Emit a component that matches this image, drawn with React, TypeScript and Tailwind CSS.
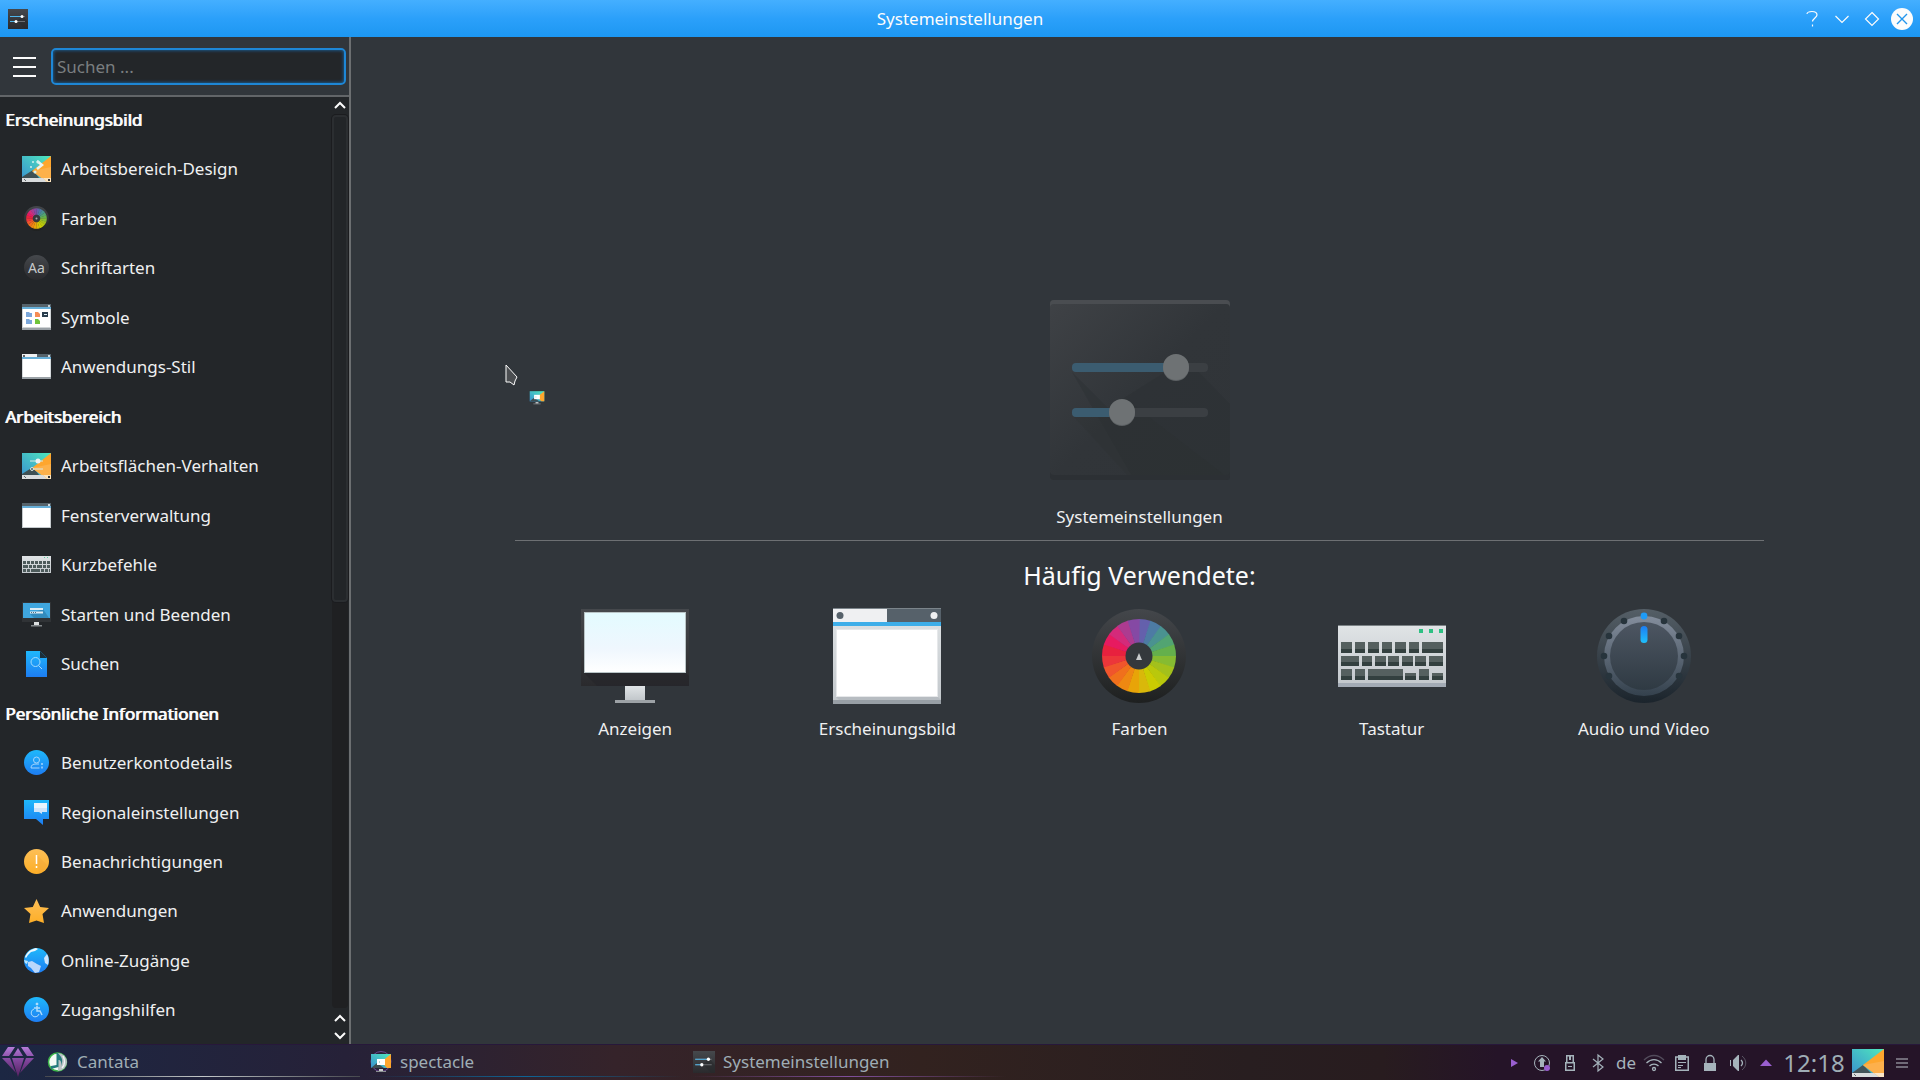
import React from 'react';

type IconProps = { className?: string };
type IconComponent = React.FC<IconProps>;

const WHEEL_COLORS = [
  '#6460ac', '#4d7ba4', '#4a9290', '#52a472', '#64b04c', '#86bb32', '#a3c01c', '#b9c80c',
  '#cbcc02', '#d9b80a', '#e8a408', '#ee8812', '#f0701c', '#f0552c', '#ec363a', '#e8213e',
  '#e71a60', '#d42a7a', '#ad3b90', '#8549a4',
];

const slicePath = (index: number, cx: number, cy: number, r: number) => {
  const step = (Math.PI * 2) / WHEEL_COLORS.length;
  const from = index * step;
  const to = from + step + 0.02;
  const point = (a: number) => `${cx + r * Math.sin(a)} ${cy - r * Math.cos(a)}`;
  return `M${cx} ${cy}L${point(from)}A${r} ${r} 0 0 1 ${point(to)}Z`;
};

const Gradients = () => (
  <svg className="absolute size-0" aria-hidden="true">
    <defs>
      <linearGradient id="blue" x1="0" y1="0" x2="0" y2="1">
        <stop offset="0" stopColor="#1fb8fb" />
        <stop offset="1" stopColor="#1d7df2" />
      </linearGradient>
      <linearGradient id="blueUp" x1="0" y1="1" x2="0" y2="0">
        <stop offset="0" stopColor="#1fc0fb" />
        <stop offset="1" stopColor="#1d7df2" />
      </linearGradient>
      <linearGradient id="orange" x1="0" y1="0" x2="0" y2="1">
        <stop offset="0" stopColor="#fdbf57" />
        <stop offset="1" stopColor="#fdae27" />
      </linearGradient>
      <linearGradient id="dark" x1="0" y1="0" x2="0" y2="1">
        <stop offset="0" stopColor="#45484c" />
        <stop offset="1" stopColor="#2a2a2d" />
      </linearGradient>
      <linearGradient id="disc" x1="0" y1="0" x2="0" y2="1">
        <stop offset="0" stopColor="#44474b" />
        <stop offset="1" stopColor="#1e2020" />
      </linearGradient>
      <linearGradient id="screen" x1="0" y1="0" x2="0" y2="1">
        <stop offset="0" stopColor="#e3fbff" />
        <stop offset="0.6" stopColor="#eff7fe" />
        <stop offset="1" stopColor="#ffffff" />
      </linearGradient>
      <linearGradient id="metal" x1="0" y1="0" x2="0" y2="1">
        <stop offset="0" stopColor="#e0e4e6" />
        <stop offset="1" stopColor="#c2c7cb" />
      </linearGradient>
      <linearGradient id="card" x1="0" y1="0" x2="1" y2="1">
        <stop offset="0" stopColor="#3f4246" />
        <stop offset="0.5" stopColor="#313539" />
        <stop offset="1" stopColor="#303438" />
      </linearGradient>
      <linearGradient id="dialOuter" x1="0" y1="0" x2="0" y2="1">
        <stop offset="0" stopColor="#555f67" />
        <stop offset="1" stopColor="#1b242c" />
      </linearGradient>
      <linearGradient id="dialRing" x1="0" y1="0" x2="0" y2="1">
        <stop offset="0" stopColor="#848e9d" />
        <stop offset="1" stopColor="#34414d" />
      </linearGradient>
      <linearGradient id="dialKnob" x1="0" y1="0" x2="0" y2="1">
        <stop offset="0" stopColor="#4d5662" />
        <stop offset="1" stopColor="#2f3a43" />
      </linearGradient>
      <linearGradient id="teal" x1="0" y1="1" x2="1" y2="0">
        <stop offset="0" stopColor="#3a8fd0" />
        <stop offset="1" stopColor="#4ee9bd" />
      </linearGradient>
      <linearGradient id="gem" x1="0" y1="0" x2="0" y2="1">
        <stop offset="0" stopColor="#b57bd8" />
        <stop offset="0.45" stopColor="#80459b" />
        <stop offset="1" stopColor="#53205f" />
      </linearGradient>
    </defs>
  </svg>
);

const Wallpaper: React.FC<{ children?: React.ReactNode; className?: string }> = ({ children, className }) => (
  <svg viewBox="0 0 30 30" className={className} aria-hidden="true">
    <rect y="2" width="29" height="26" fill="url(#teal)" />
    <path d="M0 23L11 16L17 24H0Z" fill="#3e5054" />
    <path d="M29 2V28H25L10 17Z" fill="#fea62e" />
    <path d="M10 17L29 13V28H25Z" fill="#fdb14a" />
    <path d="M0 24H21L25 28H0Z" fill="#d9dcdd" />
    <path d="M21 24H29V28H25Z" fill="#fbe3bd" />
    <path d="M2 25L4 27" stroke="#60676a" />
    {children}
  </svg>
);

const DesignIcon: IconComponent = ({ className }) => (
  <Wallpaper className={className}>
    <path d="M15 7L20 11L15 15" stroke="#e9f4f3" strokeWidth="2.500" fill="none" />
    <g fill="#d5f1ee">
      <circle cx="11" cy="8" r="1" />
      <circle cx="9" cy="13" r="1" />
      <circle cx="16" cy="8" r="1.500" />
      <circle cx="13" cy="18" r="1.500" />
    </g>
    <rect x="26" y="25" width="2" height="2" fill="#33373a" />
  </Wallpaper>
);

const BehaviourIcon: IconComponent = ({ className }) => (
  <Wallpaper className={className}>
    <path d="M8 10H21M10 18H21" stroke="#d9e9e7" strokeWidth="1" />
    <circle cx="16" cy="10" r="2.5" fill="#eef2f2" />
    <circle cx="10" cy="18" r="1.5" fill="#47575c" stroke="#d9e9e7" />
    <rect x="26" y="25" width="2" height="2" fill="#33373a" />
  </Wallpaper>
);

const ColorSmallIcon: IconComponent = ({ className }) => (
  <svg viewBox="0 0 30 30" className={className} aria-hidden="true">
    <circle cx="14.5" cy="14.5" r="12.5" fill="url(#disc)" />
    {WHEEL_COLORS.map((color, i) => (
      <path key={color} d={slicePath(i, 14.5, 14.5, 10.3)} fill={color} />
    ))}
    <circle cx="14.5" cy="14.5" r="3.7" fill="#35383c" />
    <circle cx="14.5" cy="14.5" r="1" fill="#a5a8aa" />
  </svg>
);

const FontsIcon: IconComponent = ({ className }) => (
  <svg viewBox="0 0 30 30" className={className} aria-hidden="true">
    <circle cx="14.5" cy="14.5" r="12.5" fill="url(#dark)" />
    <text x="14.5" y="20" textAnchor="middle" fontSize="14" fill="#c6c9ca" fontFamily="Noto Sans, sans-serif">
      Aa
    </text>
  </svg>
);

const SymbolsIcon: IconComponent = ({ className }) => (
  <svg viewBox="0 0 30 30" className={className} aria-hidden="true">
    <rect y="1" width="29" height="26" fill="#d0d4d6" />
    <rect y="1" width="29" height="4" fill="#56636b" />
    <rect y="4" width="29" height="2" fill="#67afd8" />
    <rect x="1" y="6" width="27" height="18" fill="#fff" />
    <rect y="25" width="29" height="2" fill="#9aa1a6" />
    <circle cx="27" cy="3" r="1" fill="#eee" />
    <path d="M4 9H7L8 10H10V14H4ZM4 16H7L8 17H10V21H4Z" fill="#7ba7da" />
    <path d="M13 9H16L18 11V14H13Z" fill="#f58d55" />
    <path d="M13 16H16L18 18V21H13Z" fill="#6fc43b" />
    <rect x="20" y="9" width="6" height="5" fill="#2b3e4d" />
    <path d="M22 11.5H25" stroke="#e6f4fb" />
  </svg>
);

const StyleIcon: IconComponent = ({ className }) => (
  <svg viewBox="0 0 30 30" className={className} aria-hidden="true">
    <rect y="2" width="29" height="25" fill="#d5d9db" />
    <rect y="2" width="15" height="4" fill="#eff0f1" />
    <rect x="15" y="2" width="14" height="4" fill="#56636b" />
    <rect y="5" width="29" height="2" fill="#67afd8" />
    <rect x="1" y="7" width="27" height="18" fill="#fff" />
    <rect y="25" width="29" height="2" fill="#9aa1a6" />
    <circle cx="2" cy="4" r="1" fill="#333" />
    <circle cx="27" cy="4" r="1" fill="#fff" />
  </svg>
);

const WindowIcon: IconComponent = ({ className }) => (
  <svg viewBox="0 0 30 30" className={className} aria-hidden="true">
    <rect y="2" width="29" height="25" fill="#c5cacd" />
    <rect y="2" width="29" height="4" fill="#56636b" />
    <rect y="5" width="29" height="2" fill="#67afd8" />
    <rect x="1" y="7" width="27" height="19" fill="#fff" />
    <circle cx="27" cy="4" r="1" fill="#fff" />
  </svg>
);

const ShortcutsIcon: IconComponent = ({ className }) => (
  <svg viewBox="0 0 30 30" className={className} aria-hidden="true">
    <rect y="6" width="29" height="17" fill="url(#metal)" />
    <path d="M22 7.5H28" stroke="#5cc79a" strokeDasharray="1 2" />
    <g fill="none" stroke="#4d5b5b" strokeWidth="3">
      <path d="M1 12.5H28" strokeDasharray="3 1" />
      <path d="M1 16.5H28" strokeDasharray="5 1 3 1 3 1" />
      <path d="M1 20.5H28" strokeDasharray="3 1 3 1 9 1" />
    </g>
  </svg>
);

const StartupIcon: IconComponent = ({ className }) => (
  <svg viewBox="0 0 30 30" className={className} aria-hidden="true">
    <rect y="2" width="29" height="20" fill="#303336" />
    <rect x="1" y="3" width="27" height="15" fill="#3fa6de" />
    <path d="M8 14L12 18H27L21 9Z" fill="#328bbd" />
    <path d="M8 9H21M8 12.5H21" stroke="#dcecf5" strokeWidth="2" />
    <path d="M9 12.5H14" stroke="#557181" strokeDasharray="1 1" />
    <rect x="12" y="22" width="5" height="3" fill="#dcdfe0" />
    <rect x="9" y="25" width="11" height="1.5" fill="#83888b" />
  </svg>
);

const SearchFileIcon: IconComponent = ({ className }) => (
  <svg viewBox="0 0 30 30" className={className} aria-hidden="true">
    <path d="M4 2H18L25 9V28H4Z" fill="url(#blue)" />
    <path d="M18 2L25 9H18Z" fill="#1c2f3a" />
    <circle cx="13.5" cy="13" r="4.5" fill="none" stroke="#a6ddfd" />
    <path d="M16.5 16.5L20 20" stroke="#a6ddfd" />
  </svg>
);

const UserIcon: IconComponent = ({ className }) => (
  <svg viewBox="0 0 30 30" className={className} aria-hidden="true">
    <circle cx="14.5" cy="14.5" r="12.5" fill="url(#blue)" />
    <g fill="none" stroke="#a4d5fc">
      <circle cx="14.5" cy="12" r="3" />
      <path d="M17.500 20H9C9 17 11 16 14 16H17" />
      <path d="M20 15V17M20 18.500V20.500" strokeWidth="1.500" />
    </g>
  </svg>
);

const RegionIcon: IconComponent = ({ className }) => (
  <svg viewBox="0 0 30 30" className={className} aria-hidden="true">
    <path d="M2 2H27V21H21V27L14 21H2Z" fill="url(#blue)" />
    <path d="M12 5H25V14H20V16L17 14H12Z" fill="#cfe4fa" />
    <path d="M12 5H25V10H12Z" fill="#e9f4fc" />
  </svg>
);

const NotifyIcon: IconComponent = ({ className }) => (
  <svg viewBox="0 0 30 30" className={className} aria-hidden="true">
    <circle cx="14.5" cy="14.5" r="12.5" fill="url(#orange)" />
    <path d="M15 8L25 18A12 12 0 0 1 17 26Z" fill="#f0a63a" opacity="0.4" />
    <path d="M14.500 8V17M14.500 19V21" stroke="#fff" strokeWidth="1.500" />
  </svg>
);

const StarIcon: IconComponent = ({ className }) => (
  <svg viewBox="0 0 30 30" className={className} aria-hidden="true">
    <path d="M14.500 3L18.200 11L27 12L20.500 18L22 27L14.500 24.500L7 27L8.500 18L2 12L10.800 11Z" fill="url(#orange)" />
  </svg>
);

const GlobeIcon: IconComponent = ({ className }) => (
  <svg viewBox="0 0 30 30" className={className} aria-hidden="true">
    <circle cx="14.5" cy="14.5" r="12.5" fill="url(#blue)" />
    <path d="M3 11C5 6 9 3 14 2L16 3L13 5L9 6L6 9L4 12Z" fill="#eef7fd" />
    <path d="M22 12L25 8C27 11 27 16 26 19L23 17Z" fill="#cfe4fb" />
    <path d="M6 16L10 15L15 18L19 20L17 26L13 27L9 22L6 20Z" fill="#b9d7fb" />
    <path d="M2 14L6 15L5 18L3 17Z" fill="#b9e4fc" />
  </svg>
);

const AccessIcon: IconComponent = ({ className }) => (
  <svg viewBox="0 0 30 30" className={className} aria-hidden="true">
    <circle cx="14.5" cy="14.5" r="12.500" fill="url(#blue)" />
    <g fill="none" stroke="#b0dcfc">
      <circle cx="15" cy="9" r="1" fill="#e0f2fe" />
      <path d="M12 13H18M15 11V16H18L20 20" strokeWidth="1.500" />
      <path d="M12 14A4 4 0 1 0 17 19" />
    </g>
  </svg>
);

const SettingsIcon: IconComponent = ({ className }) => (
  <svg viewBox="0 0 20 20" className={className} aria-hidden="true">
    <rect width="20" height="20" fill="url(#dark)" />
    <path d="M9 12L17 20H20V13L15 7Z" fill="#25272a" opacity="0.5" />
    <path d="M2 7.500H17M2 12.500H17" stroke="#6b6e72" />
    <path d="M2 7.500H13M2 12.500H8" stroke="#4fb5ea" />
    <circle cx="14" cy="7.500" r="1.500" fill="#fff" />
    <circle cx="8" cy="12.500" r="1.500" fill="#fff" />
  </svg>
);

const HeroIcon: IconComponent = ({ className }) => (
  <svg viewBox="0 0 180 180" className={className} aria-hidden="true">
    <rect width="180" height="180" rx="4" fill="url(#card)" />
    <path d="M22 72L58 108L136 59L180 104V180H84Z" fill="#2b2f33" opacity="0.4" />
    <path d="M24 117L78 176H176L81 103Z" fill="#2a2e31" opacity="0.25" />
    <path d="M0 8V4A4 4 0 0 1 4 0H176A4 4 0 0 1 180 4V8A4 4 0 0 0 176 4H4A4 4 0 0 0 0 8Z" fill="#4a4d51" />
    <path d="M0 172V176A4 4 0 0 0 4 180H176A4 4 0 0 0 180 176V172A4 4 0 0 1 176 175H4A4 4 0 0 1 0 172Z" fill="#2c3034" />
    <rect x="22" y="63" width="136" height="9" rx="4" fill="#3b3f43" />
    <rect x="22" y="63" width="104" height="9" rx="4" fill="#3b5c70" />
    <rect x="22" y="108" width="136" height="9" rx="4" fill="#3b3f43" />
    <rect x="22" y="108" width="50" height="9" rx="4" fill="#3b5c70" />
    <circle cx="126" cy="68" r="13" fill="#5d6164" />
    <circle cx="126" cy="67" r="13" fill="#6e7274" />
    <circle cx="72" cy="113" r="13" fill="#5d6164" />
    <circle cx="72" cy="112" r="13" fill="#6e7274" />
  </svg>
);

const DisplayIcon: IconComponent = ({ className }) => (
  <svg viewBox="0 0 108 96" className={className} aria-hidden="true">
    <rect y="1" width="108" height="77" fill="url(#dark)" />
    <path d="M3 65L16 78H108V68L105 65Z" fill="#252529" opacity="0.6" />
    <rect x="3" y="4" width="102" height="61" fill="#b9c4c6" />
    <rect x="4" y="5" width="100" height="59" fill="url(#screen)" />
    <rect x="44" y="78" width="20" height="14" fill="url(#metal)" />
    <rect x="34" y="92" width="40" height="3" fill="#9da2a6" />
  </svg>
);

const AppearanceIcon: IconComponent = ({ className }) => (
  <svg viewBox="0 0 108 96" className={className} aria-hidden="true">
    <rect width="108" height="96" fill="url(#metal)" />
    <rect width="54" height="14" fill="#eff0f2" />
    <rect x="54" width="54" height="14" fill="#56616a" />
    <rect width="108" height="1" fill="#7b848a" />
    <rect y="14" width="108" height="4" fill="#3daee9" />
    <path d="M3 89L10 96H108V92L105 89Z" fill="#aab0b5" opacity="0.5" />
    <rect x="3" y="21" width="102" height="68" fill="#e6e8ea" />
    <rect x="4" y="22" width="100" height="66" fill="#fff" />
    <rect y="92" width="108" height="4" fill="#989fa5" />
    <circle cx="7" cy="7.500" r="3.500" fill="#56616a" />
    <circle cx="101" cy="7.500" r="3.500" fill="#eff0f2" />
  </svg>
);

const ColorsIcon: IconComponent = ({ className }) => (
  <svg viewBox="0 0 108 96" className={className} aria-hidden="true">
    <circle cx="54" cy="48" r="47" fill="url(#disc)" />
    {WHEEL_COLORS.map((color, i) => (
      <path key={color} d={slicePath(i, 54, 48, 37)} fill={color} />
    ))}
    <circle cx="54" cy="48" r="13.5" fill="#34383c" />
    <path d="M54 45L57 52H51Z" fill="#c8cbcc" />
  </svg>
);

// x, y, width, height
const KEYS = [
  [3, 34, 11, 11], [17, 34, 10, 11], [30, 34, 11, 11], [44, 34, 10, 11], [57, 34, 11, 11], [71, 34, 10, 11], [84, 34, 21, 11],
  [3, 48, 18, 10], [24, 48, 10, 10], [37, 48, 11, 10], [50, 48, 11, 10], [64, 48, 11, 10], [77, 48, 11, 10], [91, 48, 14, 10],
  [3, 61, 11, 11], [17, 61, 10, 11], [30, 61, 35, 11], [67, 65, 11, 7], [81, 61, 10, 11], [94, 65, 11, 7],
];

const KeyboardIcon: IconComponent = ({ className }) => (
  <svg viewBox="0 0 108 96" className={className} aria-hidden="true">
    <rect y="17" width="108" height="62" fill="url(#metal)" />
    <rect y="17" width="108" height="1" fill="#7b8285" />
    <rect y="75" width="108" height="4" fill="#a3abb5" />
    <path d="M81 21H85V25H81ZM91 21H95V25H91ZM101 21H105V25H101Z" fill="#2ec183" />
    {KEYS.map(([x, y, w, h]) => (
      <g key={`${x}-${y}`}>
        <rect x={x} y={y} width={w} height={h} fill="#55605f" />
        <rect x={x} y={y + h - 4} width={w} height="4" fill="#33403f" />
      </g>
    ))}
  </svg>
);

const DIAL_DOTS = [[-20, -35], [20, -35], [-35, -20], [35, -20], [-40, 0], [40, 0], [-35, 20], [35, 20]];

const AudioIcon: IconComponent = ({ className }) => (
  <svg viewBox="0 0 108 96" className={className} aria-hidden="true">
    <circle cx="54" cy="48" r="47" fill="url(#dialOuter)" />
    <circle cx="54" cy="48" r="40" fill="url(#dialRing)" />
    <circle cx="54" cy="48" r="34" fill="url(#dialKnob)" />
    {DIAL_DOTS.map(([x, y]) => (
      <circle key={`${x}${y}`} cx={54 + x} cy={48 + y} r="3.300" fill="#27343c" />
    ))}
    <circle cx="54" cy="8" r="3.400" fill="#1e9bf7" />
    <rect x="50.500" y="18" width="7" height="17" rx="3.500" fill="url(#blueUp)" />
  </svg>
);

const SpectacleIcon: IconComponent = ({ className }) => (
  <svg viewBox="0 0 22 22" className={className} aria-hidden="true">
    <rect y="2" width="22" height="16" fill="#30363a" />
    <rect x="1" y="3" width="20" height="14" fill="url(#teal)" />
    <path d="M21 3V17H17L11 11Z" fill="#fea62e" />
    <path d="M1 17L7 12L14 17Z" fill="#3e4c50" />
    <path d="M7 8H15V14H7Z" fill="#fff" />
    <path d="M9 10H10V12H9Z" fill="#b8d6cf" />
    <rect x="9" y="18" width="4" height="2" fill="#c9cccd" />
    <rect x="6" y="20" width="10" height="1" fill="#8b9093" />
  </svg>
);

// Task entry version, ringed while the program starts
const SpectacleTaskIcon: IconComponent = ({ className }) => (
  <svg viewBox="0 0 22 22" className={className} aria-hidden="true">
    <circle cx="11" cy="10.500" r="10" fill="none" stroke="#6d4a94" />
    <rect x="1" y="3" width="20" height="14" fill="url(#teal)" />
    <path d="M21 3V17H17L11 11Z" fill="#fea62e" />
    <path d="M1 17L7 12L14 17Z" fill="#3e4c50" />
    <path d="M7 8H15V14H7Z" fill="#fff" />
    <path d="M9 10H10V12H9Z" fill="#b8d6cf" />
    <rect x="9" y="18" width="4" height="2" fill="#c9cccd" />
    <rect x="6" y="20" width="10" height="1" fill="#8b9093" />
  </svg>
);

const CantataIcon: IconComponent = ({ className }) => (
  <svg viewBox="0 0 22 22" className={className} aria-hidden="true">
    <circle cx="10.500" cy="11" r="9" fill="#f4faf5" stroke="#3cb549" strokeWidth="1.500" />
    <path d="M11 2A9 9 0 0 1 11 20Z" fill="#b9c2c4" />
    <path d="M9.500 2H11C14 6 17 8 14 15C15 10 13 9 11.500 9V16L4 18L4 15L9.500 14Z" fill="#257b7d" />
    <path d="M16 5C18 9 18 14 15 17" stroke="#f1f5f5" strokeWidth="1.500" fill="none" />
  </svg>
);

type Entry = { label: string; icon: IconComponent };

const SECTIONS: { title: string; items: Entry[] }[] = [
  {
    title: 'Erscheinungsbild',
    items: [
      { label: 'Arbeitsbereich-Design', icon: DesignIcon },
      { label: 'Farben', icon: ColorSmallIcon },
      { label: 'Schriftarten', icon: FontsIcon },
      { label: 'Symbole', icon: SymbolsIcon },
      { label: 'Anwendungs-Stil', icon: StyleIcon },
    ],
  },
  {
    title: 'Arbeitsbereich',
    items: [
      { label: 'Arbeitsflächen-Verhalten', icon: BehaviourIcon },
      { label: 'Fensterverwaltung', icon: WindowIcon },
      { label: 'Kurzbefehle', icon: ShortcutsIcon },
      { label: 'Starten und Beenden', icon: StartupIcon },
      { label: 'Suchen', icon: SearchFileIcon },
    ],
  },
  {
    title: 'Persönliche Informationen',
    items: [
      { label: 'Benutzerkontodetails', icon: UserIcon },
      { label: 'Regionaleinstellungen', icon: RegionIcon },
      { label: 'Benachrichtigungen', icon: NotifyIcon },
      { label: 'Anwendungen', icon: StarIcon },
      { label: 'Online-Zugänge', icon: GlobeIcon },
      { label: 'Zugangshilfen', icon: AccessIcon },
    ],
  },
];

const FREQUENT: Entry[] = [
  { label: 'Anzeigen', icon: DisplayIcon },
  { label: 'Erscheinungsbild', icon: AppearanceIcon },
  { label: 'Farben', icon: ColorsIcon },
  { label: 'Tastatur', icon: KeyboardIcon },
  { label: 'Audio und Video', icon: AudioIcon },
];

const TitleBar = () => (
  <header className="grid h-[37px] shrink-0 grid-cols-[1fr_auto_1fr] items-center bg-linear-to-b from-[#44afff] via-[#2ba0fa] to-[#1c97f2] text-[#fcfcfc]">
    <SettingsIcon className="ml-2 size-5" />
    <h1>Systemeinstellungen</h1>
    <div className="flex justify-end pr-[3px]">
      <button aria-label="Hilfe" className="grid size-[30px] place-items-center">
        <svg viewBox="0 0 22 22" className="size-[22px]" fill="none" stroke="currentColor">
          <path d="M6 6C6 4.500 8 3.500 11 3.500S16 4.500 16 7S11.500 10.500 11.500 13.500" strokeWidth="1.200" />
          <path d="M11.500 16.500V18.500" strokeWidth="1.200" />
        </svg>
      </button>
      <button aria-label="Minimieren" className="grid size-[30px] place-items-center">
        <svg viewBox="0 0 22 22" className="size-[22px]" fill="none" stroke="currentColor" strokeWidth="1.200">
          <path d="M4.500 8L11 14.500L17.500 8" />
        </svg>
      </button>
      <button aria-label="Wiederherstellen" className="grid size-[30px] place-items-center">
        <svg viewBox="0 0 22 22" className="size-[22px]" fill="none" stroke="currentColor" strokeWidth="1.200">
          <path d="M11 4.500L17.500 11L11 17.500L4.500 11Z" />
        </svg>
      </button>
      <button aria-label="Schließen" className="grid size-[30px] place-items-center">
        <svg viewBox="0 0 22 22" className="size-[22px]">
          <circle cx="11" cy="11" r="11" fill="#fcfcfc" />
          <path d="M6 6L16 16M16 6L6 16" stroke="#2196ee" strokeWidth="1.400" />
        </svg>
      </button>
    </div>
  </header>
);

const Chevron: React.FC<{ down?: boolean }> = ({ down }) => (
  <svg viewBox="0 0 12 8" className="h-2 w-3" fill="none" stroke="#fcfcfc" strokeWidth="2" aria-hidden="true">
    <path d={down ? 'M1 1L6 6L11 1' : 'M1 7L6 2L11 7'} />
  </svg>
);

const Scrollbar = () => (
  <div className="flex w-[17px] shrink-0 flex-col pr-px">
    <button aria-label="Nach oben" className="grid h-4 shrink-0 place-items-center">
      <Chevron />
    </button>
    <div className="mt-0.5 min-h-0 flex-1 rounded-sm bg-[#1f2022]">
      <div className="h-6/11 rounded border-2 border-[#2b2e31] bg-[#222528] shadow-[0_0_0_1px_#1b1c1f]" />
    </div>
    <button aria-label="Seite nach oben" className="grid h-5 shrink-0 place-items-center">
      <Chevron />
    </button>
    <button aria-label="Nach unten" className="grid h-4 shrink-0 place-items-center">
      <Chevron down />
    </button>
  </div>
);

const Sidebar = () => (
  <aside className="flex w-[351px] shrink-0 flex-col border-r-2 border-[#6c6f71] bg-[#232629]">
    <div className="flex h-[60px] shrink-0 items-center gap-[15px] border-b-2 border-[#626568] bg-[#31363b] pt-px pr-[3px] pl-[13px]">
      <button aria-label="Menü" className="flex w-[23px] flex-col gap-[7px]">
        <span className="h-0.5 bg-[#fcfcfc]" />
        <span className="h-0.5 bg-[#fcfcfc]" />
        <span className="h-0.5 bg-[#fcfcfc]" />
      </button>
      <input
        type="text"
        aria-label="Suchen"
        placeholder="Suchen ..."
        className="h-[37px] min-w-0 flex-1 rounded-[5px] border-2 border-[#1e87d6] bg-[#232629] px-1 shadow-[inset_0_0_3px_1px_#1d5480] outline-none placeholder:text-[#7a7e80]"
      />
    </div>
    <div className="flex min-h-0 flex-1">
      <nav className="-mt-0.5 flex min-w-0 flex-1 flex-col overflow-hidden">
        {SECTIONS.map((section) => (
          <section key={section.title} className="grid h-[297px] shrink-0 auto-rows-fr last:h-[346px]">
            <h2 className="flex items-center pl-[5px] text-[#fcfcfc] [text-shadow:1px_0_0_currentColor]">
              {section.title}
            </h2>
            <ul className="contents">
              {section.items.map(({ label, icon: Icon }) => (
                <li key={label} className="flex">
                  <button className="flex w-full items-center gap-[9px] pl-[22px] text-left">
                    <Icon className="size-[30px] shrink-0" />
                    {label}
                  </button>
                </li>
              ))}
            </ul>
          </section>
        ))}
      </nav>
      <Scrollbar />
    </div>
  </aside>
);

const Overview = () => (
  <main className="flex min-w-0 flex-1 flex-col items-center justify-center pb-10 pl-2">
    <HeroIcon className="size-[180px]" />
    <p className="mt-[25px]">Systemeinstellungen</p>
    <hr className="mt-[11px] w-4/5 border-[#6d7073]" />
    <h2 className="mt-[18px] text-[25px] leading-8 text-[#fcfcfc]">Häufig Verwendete:</h2>
    <div className="mt-[17px] grid w-4/5 grid-cols-5 gap-3">
      {FREQUENT.map(({ label, icon: Icon }) => (
        <button key={label} className="flex flex-col items-center gap-[13px]">
          <Icon className="h-24 w-[108px]" />
          {label}
        </button>
      ))}
    </div>
  </main>
);

const TASKS = [
  { label: 'Cantata', icon: CantataIcon, line: 'from-[#47494f] via-[#c3c8c9] to-[#47494f]' },
  { label: 'spectacle', icon: SpectacleTaskIcon, line: 'from-transparent via-[#0e6496] to-transparent' },
  { label: 'Systemeinstellungen', icon: SettingsIcon, line: 'from-transparent via-[#80509c] to-transparent' },
];

const TRAY: { label: string; content: React.ReactNode }[] = [
  { label: 'Wiedergabe', content: <path d="M8 7L15 11L8 15Z" fill="#9a5fd0" /> },
  {
    label: 'Aktualisierungen',
    content: (
      <>
        <circle cx="11" cy="11" r="7.500" fill="none" stroke="currentColor" />
        <path d="M11 5L15 9.500H13V15H9V9.500H7Z" fill="currentColor" />
        <circle cx="16" cy="16" r="3" fill="#9a5fd0" />
      </>
    ),
  },
  {
    label: 'Geräte',
    content: (
      <path
        d="M7 3H15V10H16V19H6V10H7ZM8.500 4.500V10H13.500V4.500H12V8H10V4.500ZM7.500 11.500V17.500H14.500V11.500ZM9 14H13V15H9Z"
        fill="currentColor"
        fillRule="evenodd"
      />
    ),
  },
  {
    label: 'Bluetooth',
    content: <path d="M6 7L16 15L11 19V3L16 7L6 15" fill="none" stroke="currentColor" strokeWidth="1.200" />,
  },
  { label: 'Tastaturbelegung', content: null },
  {
    label: 'Netzwerk',
    content: (
      <g fill="none" stroke="currentColor" strokeWidth="1.300">
        <path d="M1 8C7 2 15 2 21 8" opacity="0.35" />
        <path d="M3.500 11C8 6.500 14 6.500 18.500 11" />
        <path d="M6.500 14C9 11.500 13 11.500 15.500 14" />
        <circle cx="11" cy="17" r="1.500" />
      </g>
    ),
  },
  {
    label: 'Zwischenablage',
    content: (
      <g fill="none" stroke="currentColor">
        <path d="M4.750 5H17.250V18.250H4.750Z" strokeWidth="1.500" />
        <path d="M7 3H15V8H7Z" fill="currentColor" stroke="none" />
        <path d="M7 10.500H15M7 13.500H12M7 15.500H10" />
      </g>
    ),
  },
  {
    label: 'Sperre',
    content: (
      <>
        <rect x="5" y="11" width="12" height="8" fill="currentColor" />
        <path d="M7 11V7.500A4 4 0 0 1 15 7.500V11" fill="none" stroke="currentColor" strokeWidth="1.300" />
      </>
    ),
  },
  {
    label: 'Lautstärke',
    content: (
      <g fill="none" stroke="currentColor">
        <path d="M3 8H4V14H3ZM6 8L11 3H12V19H11L6 14Z" fill="currentColor" stroke="none" />
        <path d="M14 8C16 10 16 12 14 14" strokeWidth="1.300" />
        <path d="M15 4C20 8 20 14 15 18" opacity="0.4" />
      </g>
    ),
  },
  { label: 'Weitere', content: <path d="M5 14L11 7.500L17 14Z" fill="#9a5fd0" /> },
];

const Taskbar = () => (
  <footer className="flex h-9 shrink-0 border-t border-[#27183a] bg-[linear-gradient(to_right,#1c2743,#262138_18%,#35232a_32%,#32221f_48%,#281e20_65%,#281c1f_72%,#251428_78%)] text-[#9fadb5]">
    <button aria-label="Anwendungsmenü" className="w-9 shrink-0">
      <svg viewBox="0 0 36 34" className="h-[34px] w-9" fill="url(#gem)">
        <path d="M8 1H15L9 10H2ZM18 2L23 10H13ZM21 1H28L34 10H27ZM2 12H10L16 27ZM12 12H24L18 31ZM26 12H34L20 27Z" />
      </svg>
    </button>
    <div className="flex min-w-0 flex-1 gap-2 pl-[9px]">
      {TASKS.map(({ label, icon: Icon, line }) => (
        <button key={label} className="flex w-[315px] min-w-0 flex-col">
          <span className="flex min-h-0 flex-1 items-center gap-2 pt-[3px] pl-0.5">
            <Icon className="size-[22px]" />
            {label}
          </span>
          <span className={`mb-[3px] h-px w-full bg-linear-to-r ${line}`} />
        </button>
      ))}
    </div>
    <div className="flex items-center pr-1">
      {TRAY.map(({ label, content }) => (
        <button key={label} aria-label={label} className="grid w-7 place-items-center text-[#a5b3bb]">
          {content ? (
            <svg viewBox="0 0 22 22" className="size-[22px]">
              {content}
            </svg>
          ) : (
            'de'
          )}
        </button>
      ))}
      <time className="w-[68px] text-center text-2xl">12:18</time>
      <button aria-label="Arbeitsfläche anzeigen" className="ml-1">
        <svg viewBox="0 0 32 28" className="h-7 w-8">
          <rect width="32" height="28" fill="url(#teal)" />
          <path d="M0 24L11 16L19 24Z" fill="#435459" />
          <path d="M32 0V28H27L11 16Z" fill="#fea62e" />
          <path d="M11 16L32 12V28H27Z" fill="#fdb04c" />
          <path d="M0 24H22L27 28H0Z" fill="#d9dcdd" />
          <path d="M22 24H32V28H27Z" fill="#fbe6c8" />
          <path d="M2 25L4 27" stroke="#60676a" />
        </svg>
      </button>
      <button aria-label="Leiste einrichten" className="ml-1 grid w-7 place-items-center">
        <svg viewBox="0 0 12 10" className="h-2.5 w-3">
          <path d="M0 1H12M0 5H12M0 9H12" stroke="#706a78" strokeWidth="2" />
        </svg>
      </button>
    </div>
  </footer>
);

// Pointer with the bouncing launch icon next to it
const Pointer = () => (
  <div className="pointer-events-none absolute top-[364px] left-[505px]">
    <svg viewBox="0 0 14 24" className="h-6 w-3.5" aria-hidden="true">
      <path d="M1 1L12 13L10 17L9 21L5 18H1Z" fill="#4b4e51" stroke="#fcfcfc" />
    </svg>
    <SpectacleIcon className="mt-px ml-6 size-4" />
  </div>
);

export default function App() {
  return (
    <div className="relative flex h-screen flex-col overflow-hidden bg-[#31363b] font-['Noto_Sans',sans-serif] text-[17px] leading-6 text-[#eff0f1]">
      <Gradients />
      <TitleBar />
      <div className="flex min-h-0 flex-1">
        <Sidebar />
        <Overview />
      </div>
      <Taskbar />
      <Pointer />
    </div>
  );
}
